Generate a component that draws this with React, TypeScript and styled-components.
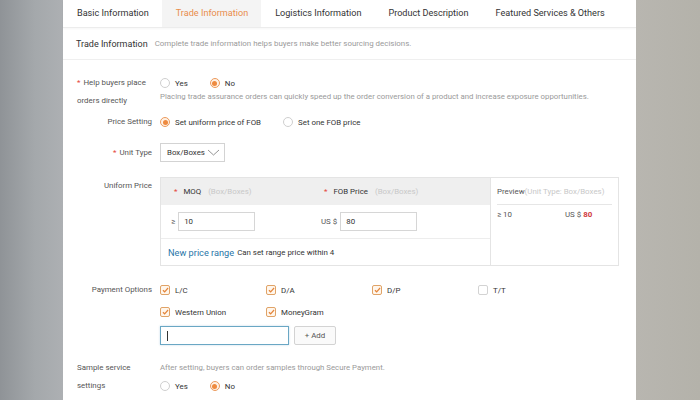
import * as React from 'react'
import styled, { createGlobalStyle } from 'styled-components'

const GlobalStyle = createGlobalStyle`
  html, body {
    margin: 0;
    padding: 0;
    font-family: Roboto, "Liberation Sans", Arial, sans-serif;
    color: #333;
  }
  * { box-sizing: border-box; }
`

const Page = styled.div`
  display: grid;
  grid-template-columns: 63px 573px 1fr;
  width: 700px;
  height: 400px;
  overflow: hidden;
`

interface IBackdropProps {
  $side: 'left' | 'right'
}

const Backdrop = styled.div<IBackdropProps>`
  background: ${({ $side }) =>
    $side === 'left'
      ? 'linear-gradient(90deg, #8f9397 0%, #a4a8ab 55%, #adb0b3 100%)'
      : 'linear-gradient(90deg, #b8b6b0 0%, #b4b2aa 100%)'};
`

const Panel = styled.main`
  background: #fff;
  display: flex;
  flex-direction: column;
  min-width: 0;
`

const TabBar = styled.nav`
  display: flex;
  height: 28px;
  border-bottom: 1px solid #ececec;
  box-shadow: 0 1px 2px rgba(0, 0, 0, 0.04);
`

interface ITabProps {
  $active?: boolean
}

const Tab = styled.div<ITabProps>`
  padding: 0 13px 0 14px;
  line-height: 27px;
  font-size: 9.1px;
  white-space: nowrap;
  color: ${({ $active }) => ($active ? '#e98d4c' : '#333')};
  background: ${({ $active }) => ($active ? '#f4f4f4' : 'transparent')};
`

const SectionHeader = styled.header`
  display: flex;
  align-items: center;
  height: 32px;
  padding-left: 13px;
  border-bottom: 1px solid #efefef;
`

const SectionTitle = styled.span`
  font-size: 9px;
  color: #333;
`

const SectionHint = styled.span`
  margin-left: 7px;
  font-size: 7.9px;
  color: #9a9a9a;
`

const Form = styled.div`
  display: flex;
  flex-direction: column;
  padding: 14px 0 0 14px;
`

interface IRowProps {
  $gap?: number
}

const Row = styled.div<IRowProps>`
  display: grid;
  grid-template-columns: 75px 1fr;
  column-gap: 8px;
  margin-top: ${({ $gap }) => $gap ?? 0}px;
  align-items: start;
`

interface ILabelProps {
  $wrap?: boolean
  $center?: boolean
  $required?: boolean
}

const Label = styled.div<ILabelProps>`
  font-size: 7.9px;
  line-height: ${({ $center }) => ($center ? '19px' : '18px')};
  color: #555;
  text-align: ${({ $wrap }) => ($wrap ? 'left' : 'right')};

  &::before {
    content: '${({ $required }) => ($required ? '*' : '')}';
    color: #e5483c;
    margin-right: ${({ $required }) => ($required ? '3px' : '0')};
  }
`

const Star = styled.span`
  color: #e5483c;
  margin-right: 3px;
`

interface IHintProps {
  $tall?: boolean
}

const Hint = styled.div<IHintProps>`
  font-size: 7.8px;
  line-height: ${({ $tall }) => ($tall ? '18px' : '10px')};
  color: #9a9a9a;
  white-space: nowrap;
`

const Options = styled.div`
  display: flex;
  align-items: center;
  height: 18px;
`

const Option = styled.label`
  display: inline-flex;
  align-items: center;
  gap: 5px;
  margin-right: 22px;
  font-size: 7.9px;
  color: #333;
  white-space: nowrap;
`

interface ICheckedProps {
  $checked?: boolean
}

const RadioDot = styled.span<ICheckedProps>`
  width: 10px;
  height: 10px;
  border-radius: 50%;
  border: 1px solid ${({ $checked }) => ($checked ? '#ec9a5c' : '#cfcfcf')};
  background: ${({ $checked }) => ($checked ? '#fff1e4' : '#fff')};
  display: inline-flex;
  align-items: center;
  justify-content: center;

  &::after {
    content: '';
    width: 5px;
    height: 5px;
    border-radius: 50%;
    background: ${({ $checked }) => ($checked ? '#ee8a3f' : 'transparent')};
  }
`

const Select = styled.div`
  display: flex;
  align-items: center;
  justify-content: space-between;
  width: 65px;
  height: 19px;
  padding: 0 4px 0 6px;
  border: 1px solid #d3d3d3;
  font-size: 7.9px;
  color: #333;
`

const PriceTable = styled.div`
  display: grid;
  grid-template-columns: 330px 1fr;
  width: 459px;
  border: 1px solid #e4e4e4;
`

const PriceEditor = styled.div`
  display: flex;
  flex-direction: column;
  border-right: 1px solid #e4e4e4;
`

const PriceHead = styled.div`
  display: grid;
  grid-template-columns: 160px 1fr;
  align-items: center;
  height: 27px;
  background: #efefef;
  font-size: 7.9px;
  color: #333;
`

const PriceInputs = styled.div`
  display: grid;
  grid-template-columns: 160px 1fr;
  align-items: center;
  height: 34px;
  border-bottom: 1px solid #ededed;
  font-size: 7.9px;
  color: #555;
`

interface ICellProps {
  $pad?: number
}

const Cell = styled.div<ICellProps>`
  display: flex;
  align-items: center;
  gap: 3px;
  padding-left: ${({ $pad }) => $pad ?? 0}px;
  white-space: nowrap;
`

const Unit = styled.span`
  color: #c8c8c8;
  margin-left: 4px;
`

const PreviewUnit = styled.span`
  color: #c8c8c8;
`

const TextInput = styled.div`
  width: 77px;
  height: 19px;
  padding-left: 5px;
  border: 1px solid #d6d6d6;
  font-size: 7.9px;
  line-height: 17px;
  color: #333;
`

const PriceFooter = styled.div`
  display: flex;
  align-items: center;
  gap: 3px;
  height: 26px;
  padding-left: 7px;
  font-size: 7.9px;
  color: #333;
`

const Link = styled.span`
  color: #2a76a8;
  font-size: 9.2px;
`

const Preview = styled.div`
  display: flex;
  flex-direction: column;
  padding: 0 6px;
  font-size: 7.9px;
`

const PreviewHead = styled.div`
  height: 27px;
  line-height: 27px;
  border-bottom: 1px solid #e6e6e6;
  color: #555;
  white-space: nowrap;
`

const PreviewRow = styled.div`
  display: grid;
  grid-template-columns: 68px 1fr;
  margin-top: 4px;
  line-height: 12px;
  color: #555;
`

const Price = styled.span`
  color: #d0393e;
  font-weight: 700;
`

const CheckGrid = styled.div`
  display: grid;
  grid-template-columns: repeat(4, 106px);
  row-gap: 12px;
  padding-top: 4px;
`

const CheckBox = styled.span<ICheckedProps>`
  width: 10px;
  height: 10px;
  border-radius: 2px;
  border: 1px solid ${({ $checked }) => ($checked ? '#e0a367' : '#d3d3d3')};
  background: ${({ $checked }) => ($checked ? '#fff6ec' : '#fff')};
  display: inline-flex;
  align-items: center;
  justify-content: center;
`

const AddLine = styled.div`
  display: flex;
  align-items: center;
  gap: 5px;
  margin-top: 9px;
`

const FocusInput = styled.div`
  display: flex;
  align-items: center;
  width: 129px;
  height: 19px;
  padding-left: 6px;
  border: 1px solid #6aa7c4;
  box-shadow: 0 0 2px rgba(80, 150, 190, 0.35);
`

const Caret = styled.span`
  width: 1px;
  height: 10px;
  background: #333;
`

const AddButton = styled.button`
  width: 42px;
  height: 19px;
  padding: 0;
  border: 1px solid #d3d3d3;
  border-radius: 2px;
  background: #fafafa;
  font-family: inherit;
  font-size: 7.9px;
  color: #555;
`

function Radio({ checked, children }: { checked?: boolean; children: React.ReactNode }) {
  return (
    <Option>
      <RadioDot $checked={checked} />
      {children}
    </Option>
  )
}

function Check({ checked, children }: { checked?: boolean; children: React.ReactNode }) {
  return (
    <Option>
      <CheckBox $checked={checked}>
        {checked && (
          <svg width="7" height="6" viewBox="0 0 8 7">
            <polyline points="1,3.8 3,5.6 7,1.2" fill="none" stroke="#e4853a" strokeWidth="1.4" />
          </svg>
        )}
      </CheckBox>
      {children}
    </Option>
  )
}

const tabs = [
  'Basic Information',
  'Trade Information',
  'Logistics Information',
  'Product Description',
  'Featured Services & Others',
]

const payments = [
  { name: 'L/C', checked: true },
  { name: 'D/A', checked: true },
  { name: 'D/P', checked: true },
  { name: 'T/T', checked: false },
  { name: 'Western Union', checked: true },
  { name: 'MoneyGram', checked: true },
]

export default function App() {
  return (
    <Page>
      <GlobalStyle />
      <Backdrop $side="left" />
      <Panel>
        <TabBar>
          {tabs.map(tab => (
            <Tab key={tab} $active={tab === 'Trade Information'}>
              {tab}
            </Tab>
          ))}
        </TabBar>
        <SectionHeader>
          <SectionTitle>Trade Information</SectionTitle>
          <SectionHint>Complete trade information helps buyers make better sourcing decisions.</SectionHint>
        </SectionHeader>
        <Form>
          <Row>
            <Label $wrap $required>
              Help buyers place orders directly
            </Label>
            <div>
              <Options>
                <Radio>Yes</Radio>
                <Radio checked>No</Radio>
              </Options>
              <Hint>
                Placing trade assurance orders can quickly speed up the order conversion of a product and increase
                exposure opportunities.
              </Hint>
            </div>
          </Row>

          <Row $gap={3}>
            <Label>Price Setting</Label>
            <Options>
              <Radio checked>Set uniform price of FOB</Radio>
              <Radio>Set one FOB price</Radio>
            </Options>
          </Row>

          <Row $gap={12}>
            <Label $center $required>
              Unit Type
            </Label>
            <Select>
              Box/Boxes
              <svg width="13" height="7" viewBox="0 0 13 7">
                <polyline points="1,1 6.5,6 12,1" fill="none" stroke="#888" strokeWidth="0.9" />
              </svg>
            </Select>
          </Row>

          <Row $gap={15}>
            <Label>Uniform Price</Label>
            <PriceTable>
              <PriceEditor>
                <PriceHead>
                  <Cell $pad={13}>
                    <Star>*</Star>MOQ<Unit>(Box/Boxes)</Unit>
                  </Cell>
                  <Cell $pad={3}>
                    <Star>*</Star>FOB Price<Unit>(Box/Boxes)</Unit>
                  </Cell>
                </PriceHead>
                <PriceInputs>
                  <Cell $pad={10}>
                    ≥<TextInput>10</TextInput>
                  </Cell>
                  <Cell>
                    US $<TextInput>80</TextInput>
                  </Cell>
                </PriceInputs>
                <PriceFooter>
                  <Link>New price range</Link>
                  Can set range price within 4
                </PriceFooter>
              </PriceEditor>
              <Preview>
                <PreviewHead>
                  Preview<PreviewUnit>(Unit Type: Box/Boxes)</PreviewUnit>
                </PreviewHead>
                <PreviewRow>
                  <span>≥ 10</span>
                  <span>
                    US $ <Price>80</Price>
                  </span>
                </PreviewRow>
              </Preview>
            </PriceTable>
          </Row>

          <Row $gap={15}>
            <Label>Payment Options</Label>
            <div>
              <CheckGrid>
                {payments.map(p => (
                  <Check key={p.name} checked={p.checked}>
                    {p.name}
                  </Check>
                ))}
              </CheckGrid>
              <AddLine>
                <FocusInput>
                  <Caret />
                </FocusInput>
                <AddButton>+ Add</AddButton>
              </AddLine>
            </div>
          </Row>

          <Row $gap={14}>
            <Label $wrap>Sample service settings</Label>
            <div>
              <Hint $tall>After setting, buyers can order samples through Secure Payment.</Hint>
              <Options>
                <Radio>Yes</Radio>
                <Radio checked>No</Radio>
              </Options>
            </div>
          </Row>
        </Form>
      </Panel>
      <Backdrop $side="right" />
    </Page>
  )
}
